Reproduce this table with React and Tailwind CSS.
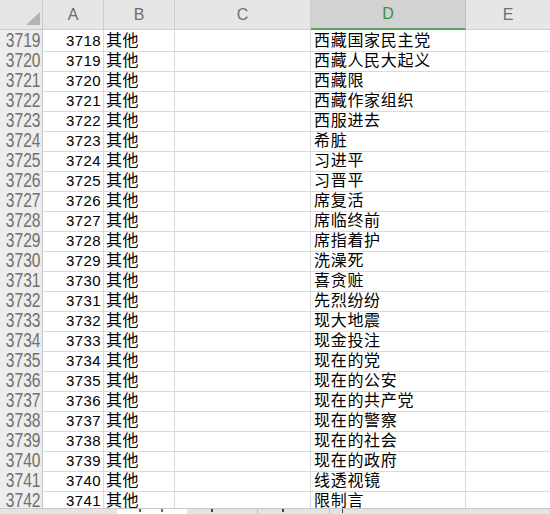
import React from "react";

const rows = [
  "西藏国家民主党",
  "西藏人民大起义",
  "西藏限",
  "西藏作家组织",
  "西服进去",
  "希脏",
  "习进平",
  "习晋平",
  "席复活",
  "席临终前",
  "席指着护",
  "洗澡死",
  "喜贪赃",
  "先烈纷纷",
  "现大地震",
  "现金投注",
  "现在的党",
  "现在的公安",
  "现在的共产党",
  "现在的警察",
  "现在的社会",
  "现在的政府",
  "线透视镜",
  "限制言",
];

const cjk = "font-['Noto_Sans_CJK_SC',sans-serif]";

const App = () => {
  const cols = "grid grid-cols-[43px_61px_71px_136px_155px_1fr]";

  return (
    <div className="w-[550px] h-[514px] bg-white overflow-hidden flex flex-col font-['Liberation_Sans',sans-serif]">
      <div className="flex-1 overflow-hidden">
        {/* column headers */}
        <div className={`${cols} h-[30px] bg-[#e6e6e6] text-[#6f6f6f] text-[16px]`}>
          <div className="relative border-r border-b border-[#c9c9c9]">
            <svg width="43" height="29" className="absolute left-0 top-0">
              <polygon points="26,25 40,25 40,12" fill="#b3b3b3" />
            </svg>
          </div>
          {["A", "B", "C"].map((c) => (
            <div
              key={c}
              className="flex items-center justify-center border-r border-b border-[#cfcfcf]"
            >
              {c}
            </div>
          ))}
          <div className="flex items-center justify-center bg-[#d2d2d2] text-[#3f8f45] border-r border-[#c4c4c4] border-b-2 border-b-[#5aa55a]">
            D
          </div>
          <div className="flex items-center justify-center border-b border-[#cfcfcf]">
            E
          </div>
        </div>

        {rows.map((d, i) => (
          <div key={i} className={`${cols} h-[20px] leading-[20px]`}>
            <div className="bg-[#ededed] border-r border-[#c6c6c6] border-b border-b-[#dadada] flex justify-end pr-[2px] text-[#707070] overflow-hidden">
              <span className="inline-block text-[20px] leading-[20px] scale-x-[0.78] origin-right">
                {3719 + i}
              </span>
            </div>
            <div className="border-r border-b border-[#d9d9d9] text-right pr-[2px] text-[15px] tracking-[0.4px] text-black pt-[1px]">
              {3718 + i}
            </div>
            <div className={`border-r border-b border-[#d9d9d9] pl-[2px] text-[16px] leading-[19px] tracking-[0.5px] text-black whitespace-nowrap ${cjk}`}>
              其他
            </div>
            <div className="border-r border-b border-[#d9d9d9]" />
            <div className={`border-r border-b border-[#d9d9d9] pl-[3px] text-[16px] leading-[19px] tracking-[0.7px] text-black whitespace-nowrap ${cjk}`}>
              {d}
            </div>
            <div className="border-b border-[#d9d9d9]" />
          </div>
        ))}
      </div>

      {/* sheet tabs strip */}
      <div className="h-[6px] flex bg-[#e4e4e4] border-t border-[#c8c8c8]">
        <div className="w-[117px]" />
        <div className="w-[70px] bg-white flex gap-[20px] pl-[22px]">
          <span className="w-[2px] h-[3px] bg-[#2e8b3e]" />
          <span className="w-[2px] h-[3px] bg-[#2e8b3e]" />
        </div>
        <div className="w-[71px] border-r border-[#bdbdbd] pl-[24px]">
          <span className="block w-[2px] h-[3px] bg-[#444]" />
        </div>
        <div className="w-[72px] border-r border-[#bdbdbd] pl-[24px]">
          <span className="block w-[2px] h-[3px] bg-[#444]" />
        </div>
        <div className="pl-[12px]">
          <span className="block w-[1px] h-[4px] bg-[#444]" />
        </div>
      </div>
    </div>
  );
};

export default App;
